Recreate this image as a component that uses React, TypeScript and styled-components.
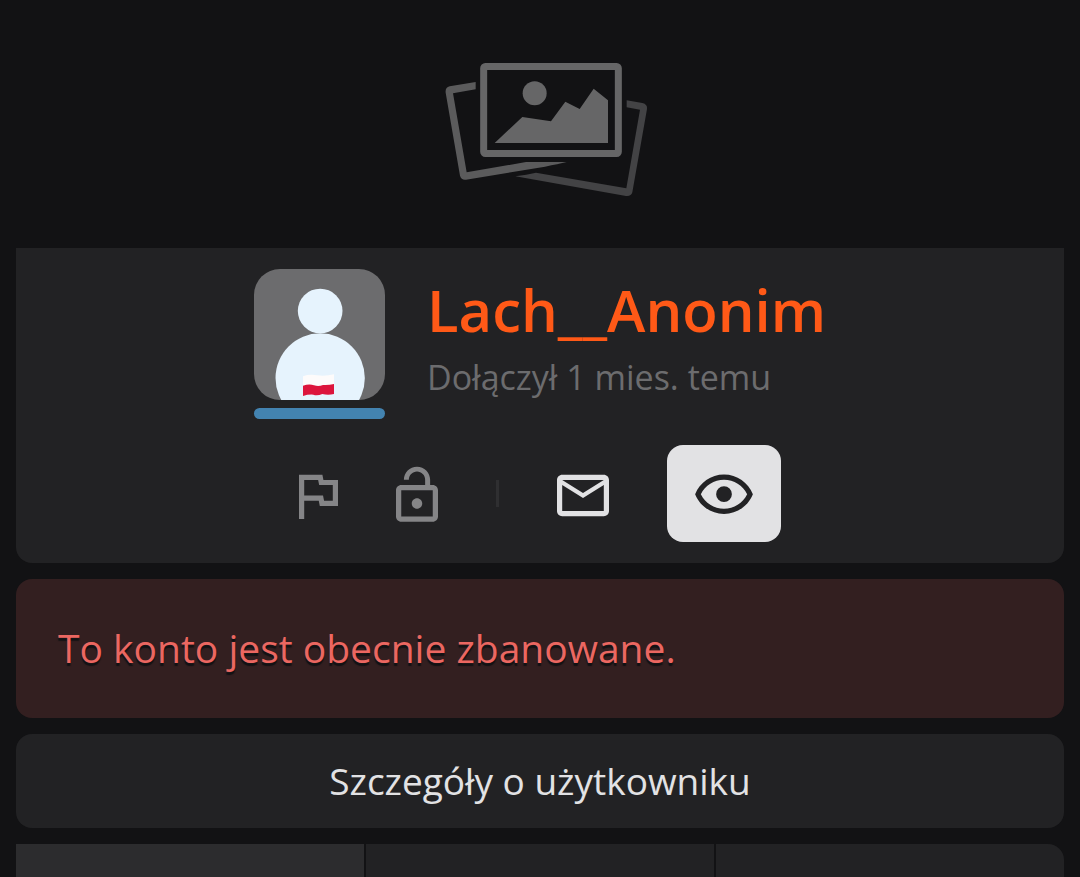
import React from "react";
import styled, { createGlobalStyle } from "styled-components";

const GlobalStyle = createGlobalStyle`
  *, *::before, *::after { box-sizing: border-box; }
  body {
    margin: 0;
    background: #121214;
    color: #e2e2e4;
    font-family: "Open Sans", "Noto Sans", sans-serif;
  }
`;

const Page = styled.main`
  display: flex;
  flex-direction: column;
  gap: 16px;
  padding: 0 16px;
`;

const Cover = styled.div`
  display: flex;
  justify-content: center;
  padding: 62px 0 51px;
  background: #121214;
`;

const Panel = styled.section`
  display: flex;
  flex-direction: column;
  gap: 26px;
  padding: 21px 16px;
  border-radius: 0 0 16px 16px;
  background: #222224;
`;

const Identity = styled.div`
  display: flex;
  justify-content: center;
  gap: 42px;
`;

const AvatarColumn = styled.div`
  display: flex;
  flex-direction: column;
  gap: 8px;
  width: 131px;
`;

const Avatar = styled.svg`
  display: block;
  width: 131px;
  height: 131px;
  border-radius: 26px;
  background: #6c6c6e;
`;

const RankBar = styled.div`
  height: 11px;
  border-radius: 6px;
  background: #4383b0;
`;

const NameColumn = styled.div`
  display: flex;
  flex-direction: column;
  padding-top: 1px;
`;

const Name = styled.h1`
  margin: 0;
  font-size: 58px;
  font-weight: 600;
  line-height: 80px;
  color: #ff5917;
`;

const Joined = styled.p`
  margin: 0;
  font-size: 34px;
  line-height: 54px;
  color: #6c6c6e;
`;

const Actions = styled.div`
  display: flex;
  justify-content: center;
  align-items: center;
  gap: 58px;
`;

const IconButton = styled.button<{ $tone: string; $filled?: boolean }>`
  display: flex;
  justify-content: center;
  align-items: center;
  height: 97px;
  padding: 3px ${(p) => (p.$filled ? "28px" : "0")} 0;
  border: 0;
  border-radius: 16px;
  background: ${(p) => (p.$filled ? "#e2e2e4" : "transparent")};
  color: ${(p) => p.$tone};
  cursor: pointer;
`;

const Divider = styled.span`
  width: 3px;
  height: 27px;
  background: #2f2f31;
`;

const Notice = styled.p`
  margin: 0;
  padding: 39px 42px 40px;
  border-radius: 16px;
  background: #331f20;
  color: #eb6761;
  font-size: 39px;
  line-height: 60px;
  text-shadow: 0 3px 1px #121214;
`;

const DetailsButton = styled.button`
  padding: 20px;
  border: 0;
  border-radius: 16px;
  background: #222224;
  color: #e2e2e4;
  font-family: inherit;
  font-size: 37px;
  line-height: 54px;
  cursor: pointer;
`;

const Tabs = styled.nav`
  display: grid;
  grid-template-columns: repeat(3, 1fr);
  gap: 2px;
  border-radius: 0 16px 0 0;
  overflow: hidden;
`;

const Tab = styled.button<{ $active?: boolean }>`
  height: 33px;
  border: 0;
  background: ${(p) => (p.$active ? "#2c2c2e" : "#222224")};
`;

/* Material glyphs cropped to their own horizontal extent. */
function Glyph({ x, units, width, d }: { x: number; units: number; width: number; d: string }) {
  return (
    <svg width={width} height={63} viewBox={`${x} 0 ${units} 24`} fill="currentColor" aria-hidden="true">
      <path d={d} />
    </svg>
  );
}

const FLAG = "M12.36 6l.4 2H18v6h-3.36l-.4-2H7V6h5.36M14 4H5v17h2v-7h5.6l.4 2h7V6h-5.6L14 4z";
const LOCK =
  "M12 17c1.1 0 2-.9 2-2s-.9-2-2-2-2 .9-2 2 .9 2 2 2zm6-9h-1V6c0-2.76-2.24-5-5-5S7 3.24 7 6h1.9c0-1.71 1.39-3.1 3.1-3.1s3.1 1.39 3.1 3.1v2H6c-1.1 0-2 .9-2 2v10c0 1.1.9 2 2 2h12c1.1 0 2-.9 2-2V10c0-1.1-.9-2-2-2zm0 12H6V10h12v10z";
const MAIL =
  "M22 6c0-1.1-.9-2-2-2H4c-1.1 0-2 .9-2 2v12c0 1.1.9 2 2 2h16c1.1 0 2-.9 2-2V6zm-2 0l-8 5-8-5h16zm0 12H4V8l8 5 8-5v10z";
const EYE =
  "M12 6c3.79 0 7.17 2.13 8.82 5.5C19.17 14.87 15.79 17 12 17s-7.17-2.13-8.82-5.5C4.83 8.13 8.21 6 12 6m0-2C7 4 2.73 7.11 1 11.5 2.73 15.89 7 19 12 19s9.27-3.11 11-7.5C21.27 7.11 17 4 12 4zm0 4.5a3 3 0 1 0 0 6 3 3 0 0 0 0-6z";

export default function App() {
  return (
    <>
      <GlobalStyle />
      <Page>
        <div>
          <Cover>
            <svg width="220" height="135" viewBox="0 36 660 405" aria-hidden="true">
              <path
                fill="#5b5b5c"
                d="M137 96L59 109Q45 113 47 128L90 377Q94 391 108 389L345 350Q385 342 410 336H288L110 367L69 130L137 118Z"
              />
              <path
                fill="#434345"
                d="M590 151L637 159Q653 163 651 177L607 427Q603 440 588 438L256 379Q290 374 318 368L589 415L630 179L590 172Z"
              />
              <rect x="161" y="49.500" width="404" height="261" rx="5" fill="none" stroke="#666667" strokeWidth="21" />
              <circle cx="314" cy="130" r="36" fill="#666667" />
              <path fill="#666667" d="M194 279L277 201L363 214L406 155L449 177L491 116L534 151V279Z" />
            </svg>
          </Cover>
          <Panel>
            <Identity>
              <AvatarColumn>
                <Avatar viewBox="0 0 393 393" role="img" aria-label="Awatar">
                  <circle cx="198.500" cy="126" r="67" fill="#e6f3fd" />
                  <circle cx="198.500" cy="327" r="134" fill="#e6f3fd" />
                  <path fill="#fdfbfb" d="M147 322Q165 315 190 319Q215 322 240 316V350H147Z" />
                  <path fill="#dc143c" d="M147 350Q166 344 180 349Q194 353 207 348Q225 349 240 345V375Q222 379 205 375Q190 381 178 377Q162 376 147 381Z" />
                </Avatar>
                <RankBar />
              </AvatarColumn>
              <NameColumn>
                <Name>Lach__Anonim</Name>
                <Joined>Dołączył 1 mies. temu</Joined>
              </NameColumn>
            </Identity>
            <Actions>
              <IconButton $tone="#858587" aria-label="Zgłoś">
                <Glyph x={5} units={15} width={39} d={FLAG} />
              </IconButton>
              <IconButton $tone="#858587" aria-label="Zablokuj">
                <Glyph x={4} units={16} width={42} d={LOCK} />
              </IconButton>
              <Divider />
              <IconButton $tone="#e2e2e4" aria-label="Wiadomość">
                <Glyph x={2} units={20} width={52} d={MAIL} />
              </IconButton>
              <IconButton $tone="#222224" $filled aria-label="Obserwuj">
                <Glyph x={1} units={22} width={58} d={EYE} />
              </IconButton>
            </Actions>
          </Panel>
        </div>
        <Notice>To konto jest obecnie zbanowane.</Notice>
        <DetailsButton>Szczegóły o użytkowniku</DetailsButton>
        <Tabs>
          <Tab $active />
          <Tab />
          <Tab />
        </Tabs>
      </Page>
    </>
  );
}
